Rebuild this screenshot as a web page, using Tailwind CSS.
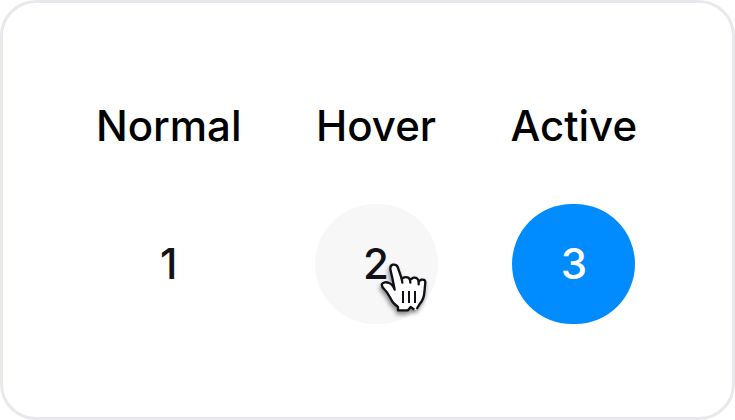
<!DOCTYPE html>
<html lang="en">
<head>
<meta charset="utf-8">
<meta name="viewport" content="width=device-width, initial-scale=1">
<title>Button states</title>
<script src="https://cdn.jsdelivr.net/npm/@tailwindcss/browser@4"></script>
</head>
<body class="bg-white font-['Inter',sans-serif]">
<main class="flex min-h-screen items-center justify-center rounded-[36px] border-[3px] border-[#e9e9ed] bg-white pt-1 pr-0.5 text-[42px] leading-[52px] font-medium text-black">
  <div class="flex gap-[73px]">
    <section class="flex flex-col items-center gap-[52px]">
      <h2>Normal</h2>
      <button type="button" class="h-[120px] w-[123px] rounded-full text-[#12131a]">1</button>
    </section>
    <section class="flex flex-col items-center gap-[52px]">
      <h2>Hover</h2>
      <div class="relative">
        <button type="button" class="h-[120px] w-[123px] rounded-[60px] bg-[#f7f7f7] text-[#12131a]">2</button>
        <svg class="pointer-events-none absolute top-[51px] left-[55px] h-[66px] w-[66px] overflow-visible drop-shadow-[-1px_3px_2px_rgba(0,0,0,0.45)]" viewBox="0 0 198 198" aria-hidden="true">
          <path fill="#fff" d="M74 104 C69 91 63 86 57 84 C49 80 39 82 36 87 C33 94 39 99 45 105 C56 115 60 130 68 141 C72 147 79 151 84 156 V166 H114 L122 157 L132 164 L138 165 L149 147 C158 137 162 129 163 113 L166 82 C166 74 160 73 154 74 L146 79 C144 69 138 67 130 68 L120 74 C117 67 109 66 103 67 L95 71 L83 36 C80 28 74 28 68 29 C60 32 60 39 62 47 L67 69 Z"/>
          <path fill="none" stroke="#101116" stroke-width="7" stroke-linejoin="round" d="M133 164 L122 156 L114 166 H84 V156 C79 151 72 147 68 141 C60 130 56 115 45 105 C39 99 33 94 36 87 C39 82 49 80 57 84 C63 86 69 91 74 104 L67 69 L62 47 C60 39 60 32 68 29 C74 28 80 28 83 36 L95 71 L103 67 C109 66 117 67 120 74 L130 68 C138 67 144 69 146 79 L154 74 C160 73 166 74 166 82 L163 113 C162 129 158 137 149 147 L140 162"/>
          <path fill="none" stroke="#101116" stroke-width="7" stroke-linecap="round" d="M95 71 L97 83 M120 74 L121 83 M146 79 L146 88"/>
          <path fill="none" stroke="#101116" stroke-width="6" d="M99 108 V144 M117 108 V144 M135 108 V144"/>
        </svg>
      </div>
    </section>
    <section class="flex flex-col items-center gap-[52px]">
      <h2>Active</h2>
      <button type="button" class="h-[120px] w-[123px] rounded-[60px] bg-[#008cff] text-white">3</button>
    </section>
  </div>
</main>
</body>
</html>
